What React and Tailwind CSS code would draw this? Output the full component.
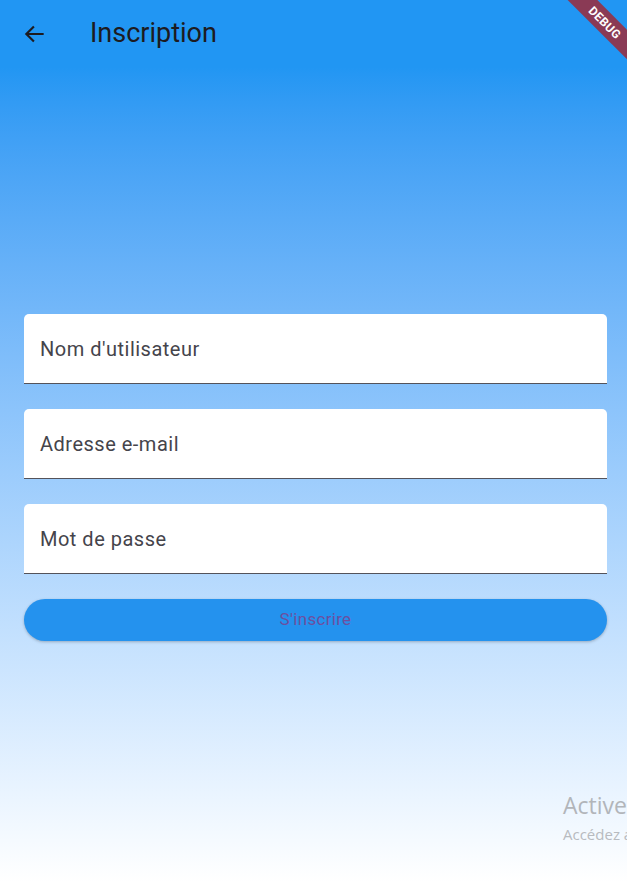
import React from 'react';

const FIELDS = ["Nom d'utilisateur", 'Adresse e-mail', 'Mot de passe'];

const Field = ({ label }) => (
    <div className="h-[70px] bg-white rounded-t-[5px] border-b-[1.5px] border-[#54535a] flex items-center px-4">
        <span className="text-[20px] tracking-[0.5px] text-[#45444b]">{label}</span>
    </div>
);

export default function App() {
    return (
        <div
            className="relative w-[627px] h-[882px] overflow-hidden flex flex-col bg-[#2196f3]"
            style={{ fontFamily: 'Roboto, "Noto Sans", sans-serif' }}
        >
            {/* App bar */}
            <div className="h-[67px] shrink-0 flex items-center pl-[22px] text-[#1d1b20]">
                <svg width="26" height="26" viewBox="0 0 24 24" fill="none" stroke="currentColor" strokeWidth="2">
                    <path d="M20 12H4.5M11 5l-7 7 7 7" />
                </svg>
                <span className="ml-[42px] text-[27px] leading-none">Inscription</span>
            </div>

            {/* Body */}
            <div className="flex-1 bg-gradient-to-b from-[#2196f3] to-white flex flex-col justify-center pl-6 pr-5 pt-[6px]">
                <div className="flex flex-col gap-[25px]">
                    {FIELDS.map((f) => (
                        <Field key={f} label={f} />
                    ))}
                </div>
                <button className="mt-[25px] h-[42px] rounded-full bg-[#2492ee] shadow-[0_1px_3px_rgba(0,0,0,0.25)] text-[17px] tracking-[0.3px] text-[#6d4fa0]">
                    S'inscrire
                </button>
            </div>

            {/* Windows watermark */}
            <div className="absolute left-[563px] top-[790px] whitespace-nowrap" style={{ fontFamily: '"Open Sans", "Noto Sans", sans-serif' }}>
                <div className="text-[23px] leading-[30px] text-[#b2b5ba]">Activer Windows</div>
                <div className="text-[15px] leading-[20px] mt-[4px] text-[#b8bbc0]">Accédez aux paramètres</div>
            </div>

            {/* Debug banner */}
            <div className="absolute top-[12px] left-[543px] w-[124px] h-[21px] bg-[#8a3a55] rotate-45 flex items-center justify-center">
                <span className="text-white text-[12px] font-bold tracking-[0.3px]">DEBUG</span>
            </div>
        </div>
    );
}
